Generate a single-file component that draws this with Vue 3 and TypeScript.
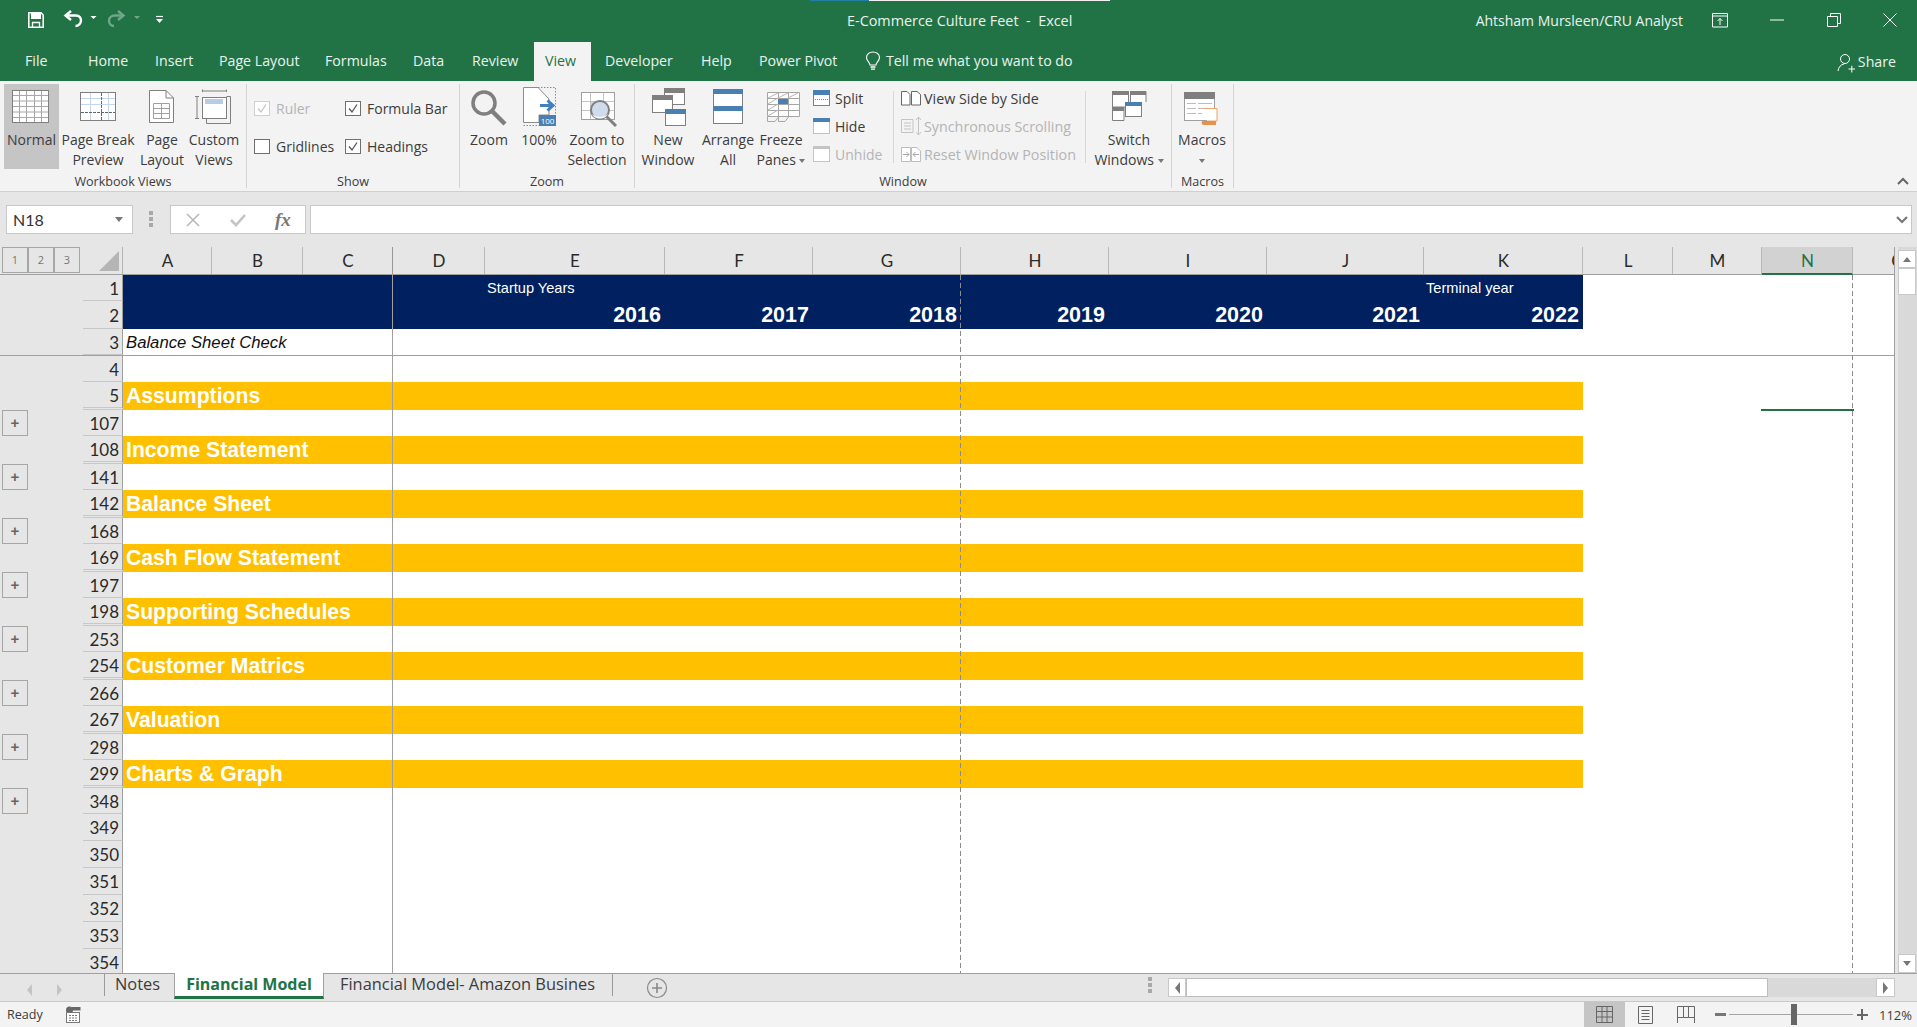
<template>
  <div class="excel">
    <!-- Title bar -->
    <div class="titlebar">
      <div class="load-bar"></div>
      <div class="qat">
        <svg class="qat-save" viewBox="28 13 16 16" width="16" height="16"><path d="M28.8 13.8H41L43.2 16V28.2H28.8Z" fill="none" stroke="#fff" stroke-width="1.6"/><rect x="31" y="14" width="10" height="6" fill="#fff"/><path d="M32.5 28V23.5H39.5V28" fill="none" stroke="#fff" stroke-width="1.4"/></svg>
        <svg class="qat-undo" viewBox="62 12 40 20" width="40" height="20"><path d="M66 17.5H76C79.5 17.5 81 20 81 22.5C81 25.5 78.5 28 75.5 28" fill="none" stroke="#fff" stroke-width="2.4"/><path d="M71 13L65.5 17.5L71 22" fill="none" stroke="#fff" stroke-width="2.4"/><path d="M90.5 18H96.5L93.5 21Z" fill="#fff"/></svg>
        <svg class="qat-redo" viewBox="106 12 36 20" width="36" height="20"><path d="M122 17.5H115C111 17.5 109 20 109 22.5C109 25.5 111 28 114 28" fill="none" stroke="#6fa788" stroke-width="2.4"/><path d="M118 13L123.5 17.5L118 22" fill="none" stroke="#6fa788" stroke-width="2.4"/><path d="M134 18H140L137 21Z" fill="#6fa788"/></svg>
        <svg class="qat-more" viewBox="155 15 9 10" width="9" height="10"><path d="M156 16.5H163" stroke="#fff" stroke-width="1.2"/><path d="M156 19H163L159.5 23Z" fill="#fff"/></svg>
      </div>
      <div class="title">E-Commerce Culture Feet&nbsp; -&nbsp; Excel</div>
      <div class="user">Ahtsham Mursleen/CRU Analyst</div>
      <div class="win-btn"><svg viewBox="0 0 16 16" width="16" height="16"><path d="M.5 1.5H15.5V15H.5Z M.5 4H15.5" fill="none" stroke="#fff"/><path d="M8 13V6.5M5.5 9L8 6.5L10.5 9" fill="none" stroke="#fff"/></svg></div>
      <div class="win-btn"><svg viewBox="0 0 14 14" width="14" height="14"><path d="M0 7H14" stroke="#fff"/></svg></div>
      <div class="win-btn"><svg viewBox="0 0 14 14" width="14" height="14"><path d="M.5 3.5H10.5V13.5H.5Z M3.5 3.5V.5H13.5V10.5H10.5" fill="none" stroke="#fff"/></svg></div>
      <div class="win-btn"><svg viewBox="0 0 14 14" width="14" height="14"><path d="M.5 .5L13.5 13.5M13.5 .5L.5 13.5" stroke="#fff"/></svg></div>
    </div>

    <!-- Ribbon tabs -->
    <div class="tabs">
      <div
        v-for="t in tabs"
        :key="t.label"
        class="tab"
        :class="{ active: t.label === 'View' }"
        :style="{ width: t.w + 'px', paddingLeft: (t.pad || 0) + 'px' }"
      >{{ t.label }}</div>
      <svg class="bulb" viewBox="0 0 16 20" width="16" height="20"><path d="M5 14C5 11.5 1.5 10 1.5 6.5C1.5 3.2 4.5 1 8 1C11.5 1 14.5 3.2 14.5 6.5C14.5 10 11 11.5 11 14Z" fill="none" stroke="#fff" stroke-width="1.1"/><path d="M5.5 16H10.5M6 18.2H10" stroke="#fff" stroke-width="1.3"/></svg>
      <div class="tell">Tell me what you want to do</div>
      <div class="share">
        <svg viewBox="0 0 18 20" width="18" height="20"><circle cx="8" cy="6" r="4.5" fill="none" stroke="#fff"/><path d="M1 18C1.5 14 4 11.5 7 11M11.5 16H18M14.8 12.8V19.5" fill="none" stroke="#fff"/></svg>
        <span>Share</span>
      </div>
    </div>

    <!-- Ribbon -->
    <div class="ribbon">
      <div class="group g-views">
        <div class="group-body">
          <div class="big selected w-normal">
            <svg viewBox="4 84 55 46" width="55" height="46">
              <rect x="12.5" y="90.5" width="36" height="32" fill="#fff" stroke="#7f7f7f"/>
              <path d="M19.5 91V122M26.5 91V122M34.5 91V122M41.5 91V122M13 95.5H48M13 101H48M13 106.5H48M13 112H48M13 117.5H48" stroke="#a6a6a6"/>
            </svg>
            <div class="label">Normal</div>
          </div>
          <div class="big w-break">
            <svg viewBox="60 84 76 46" width="76" height="46">
              <rect x="80.5" y="92.5" width="35" height="28" fill="#fff" stroke="#7f7f7f"/>
              <path d="M81 98.5H115M81 104.5H115M90.5 93V120M108.5 93V120" stroke="#c5d6ea"/>
              <path d="M101.5 93V120M81 112.5H115" stroke="#666" stroke-dasharray="3 1"/>
            </svg>
            <div class="label">Page Break<br />Preview</div>
          </div>
          <div class="big w-layout">
            <svg viewBox="136 84 52 46" width="52" height="46">
              <path d="M149.5 90.5H166L173.5 98V122.5H149.5Z" fill="#fff" stroke="#7f7f7f"/>
              <path d="M166 90.5V98H173.5" fill="none" stroke="#7f7f7f"/>
              <path d="M153.5 103.5H169.5V118.5H153.5ZM153.5 108.5H169.5M153.5 113.5H169.5M161.5 103.5V118.5" fill="none" stroke="#a0a0a0"/>
            </svg>
            <div class="label">Page<br />Layout</div>
          </div>
          <div class="big w-custom">
            <svg viewBox="188 84 52 46" width="52" height="46">
              <rect x="202.5" y="97.5" width="24" height="21" fill="#fff" stroke="#7f7f7f"/>
              <path d="M226.5 96.5H230.5V123.5H206.5V118.5" fill="none" stroke="#7f7f7f"/>
              <rect x="205" y="99" width="18" height="5" fill="#b8cce4"/>
              <path d="M202.5 92V89.5M226.5 92V89.5M202.5 91H226.5M195 96.5H199M197 96.5V118.5M195 118.5H199" fill="none" stroke="#7f7f7f"/>
            </svg>
            <div class="label">Custom<br />Views</div>
          </div>
        </div>
        <div class="group-name">Workbook Views</div>
      </div>

      <div class="group g-show">
        <div class="group-body show-grid">
          <div v-for="c in checks" :key="c.label" class="check" :class="{ off: c.disabled }">
            <span class="box">
              <svg v-if="c.on" viewBox="0 0 14 13" width="14" height="13"><path d="M3 6.5L6 10L11 2.5" fill="none" stroke="currentColor" stroke-width="1.3"/></svg>
            </span>
            <span>{{ c.label }}</span>
          </div>
        </div>
        <div class="group-name">Show</div>
      </div>

      <div class="group g-zoom">
        <div class="group-body">
          <div class="big w-zoom">
            <svg viewBox="466 84 46 46" width="46" height="46">
              <circle cx="484" cy="103" r="11" fill="none" stroke="#7f7f7f" stroke-width="3.5"/>
              <path d="M492.5 111.5L505 124" stroke="#7f7f7f" stroke-width="4.5"/>
            </svg>
            <div class="label">Zoom</div>
          </div>
          <div class="big w-hundred">
            <svg viewBox="512 84 54 46" width="54" height="46">
              <path d="M523.5 87.5H538L549 99V115H539V122.5H523.5Z" fill="#fff" stroke="#8c8c8c"/>
              <path d="M538 87.5H555.5V115M523.5 125.5H539" fill="none" stroke="#8c8c8c" stroke-dasharray="1.5 1.5"/>
              <path d="M540 105.5H552M547.5 100.5L553 105.5L547.5 110.5" fill="none" stroke="#3f7fc0" stroke-width="3"/>
              <rect x="539" y="115" width="17" height="11" fill="#4a7fb5"/>
              <text x="547.5" y="124" class="tiny">100</text>
            </svg>
            <div class="label">100%</div>
          </div>
          <div class="big w-sel">
            <svg viewBox="566 84 62 46" width="62" height="46">
              <rect x="581.5" y="92.5" width="33" height="27" fill="#fff" stroke="#a0a0a0"/>
              <path d="M590.5 93V119M603.5 93V119M582 101.5H614M582 110.5H614" stroke="#c4c4c4"/>
              <rect x="591" y="102" width="13" height="8" fill="#d4d4d4"/>
              <circle cx="600" cy="110" r="9" fill="#cfdcec" stroke="#7f7f7f" stroke-width="2"/>
              <path d="M592 114C595 118 605 118 608 114C606 120 594 120 592 114Z" fill="#fff"/>
              <path d="M606.5 116.5L616 126" stroke="#7f7f7f" stroke-width="3"/>
            </svg>
            <div class="label">Zoom to<br />Selection</div>
          </div>
        </div>
        <div class="group-name">Zoom</div>
      </div>

      <div class="group g-window">
        <div class="group-body">
          <div class="big w-new">
            <svg viewBox="640 84 56 46" width="56" height="46">
              <rect x="664.5" y="88.5" width="20" height="16" fill="#fff" stroke="#7f7f7f"/><rect x="664" y="88" width="21" height="5" fill="#7f7f7f"/>
              <rect x="652.5" y="95.5" width="20" height="17" fill="#fff" stroke="#7f7f7f"/><rect x="652" y="95" width="21" height="5" fill="#7f7f7f"/>
              <rect x="665.5" y="109.5" width="20" height="16" fill="#fff" stroke="#7f7f7f"/><rect x="665" y="109" width="21" height="5" fill="#4a7fb5"/>
            </svg>
            <div class="label">New<br />Window</div>
          </div>
          <div class="big w-arrange">
            <svg viewBox="696 84 64 46" width="64" height="46">
              <rect x="713.5" y="89.5" width="29" height="34" fill="#fff" stroke="#7f7f7f"/>
              <rect x="713" y="89" width="30" height="5" fill="#4a7fb5"/><rect x="713" y="106" width="30" height="5" fill="#4a7fb5"/>
            </svg>
            <div class="label">Arrange<br />All</div>
          </div>
          <div class="big w-freeze">
            <svg viewBox="760 84 42 46" width="42" height="46">
              <path d="M767.5 92.5H799.5V116.5H767.5Z" fill="#fff" stroke="#a6a6a6"/>
              <path d="M767.5 98.5H799.5M767.5 104.5H799.5M767.5 110.5H799.5M778.5 93V116M788.5 93V116" stroke="#a6a6a6"/>
              <path d="M768 98L778 93M768 104L778 98M768 110L778 104M768 116L778 110M778 98L788 93M788 98L798 93" stroke="#b5b5b5"/>
              <path d="M767.5 117V121.5H775L778.5 117M778.5 117V121.5H785L788.5 117" fill="none" stroke="#a6a6a6"/>
              <rect x="778" y="99" width="10" height="5" fill="#4a7fb5"/>
            </svg>
            <div class="label">Freeze<br />Panes <span class="caret"></span></div>
          </div>
          <div class="small-col col-panes">
            <div class="small">
              <svg viewBox="813 90 18 16" width="18" height="16"><rect x="813.5" y="90.5" width="16" height="15" fill="#fff" stroke="#7f7f7f"/><rect x="813" y="90" width="17" height="5" fill="#4a7fb5"/><path d="M815 99.5H828" stroke="#888" stroke-dasharray="1 1"/></svg>
              <span>Split</span>
            </div>
            <div class="small">
              <svg viewBox="813 118 18 16" width="18" height="16"><rect x="813.5" y="118.5" width="16" height="15" fill="#fff" stroke="#888" stroke-dasharray="1 1"/><rect x="813" y="118" width="17" height="4" fill="#4a7fb5"/></svg>
              <span>Hide</span>
            </div>
            <div class="small off">
              <svg viewBox="813 146 18 16" width="18" height="16"><rect x="813.5" y="146.5" width="16" height="15" fill="#fff" stroke="#c4c4c4"/><rect x="813" y="146" width="17" height="3" fill="#c4c4c4"/></svg>
              <span>Unhide</span>
            </div>
          </div>
          <div class="small-col col-side">
            <div class="small">
              <svg viewBox="901 91 21 15" width="21" height="15"><path d="M901.5 91.5H907L910 94.5V105H901.5ZM911.5 105V91.5H917L920.5 94.5V105Z" fill="#fff" stroke="#666"/></svg>
              <span>View Side by Side</span>
            </div>
            <div class="small off">
              <svg viewBox="901 118 21 18" width="21" height="18"><path d="M901.5 120.5H913V133.5H901.5ZM904 124H911M904 127H911M904 130H911" fill="none" stroke="#c4c4c4"/><path d="M918.5 118V136M916 121L918.5 118L921 121M916 133L918.5 136L921 133" fill="none" stroke="#c4c4c4"/></svg>
              <span>Synchronous Scrolling</span>
            </div>
            <div class="small off">
              <svg viewBox="901 146 21 17" width="21" height="17"><path d="M901.5 147.5H910.5V161.5H901.5ZM911.5 161.5V147.5H917L920.5 151V161.5Z" fill="#fff" stroke="#bdbdbd"/><path d="M903 154.5H909M906.5 152L909 154.5L906.5 157M919 154.5H913M915.5 152L913 154.5L915.5 157" fill="none" stroke="#a8a8a8"/></svg>
              <span>Reset Window Position</span>
            </div>
          </div>
          <div class="big w-switch">
            <svg viewBox="1090 84 78 46" width="78" height="46">
              <path d="M1112.5 91.5H1128.5V107H1112.5ZM1130.5 102V91.5H1146V102" fill="#fff" stroke="#7f7f7f"/>
              <rect x="1112" y="91" width="17" height="4" fill="#7f7f7f"/><rect x="1130" y="91" width="16" height="4" fill="#7f7f7f"/>
              <path d="M1112.5 107.5H1124V120.5H1112.5Z" fill="#fff" stroke="#7f7f7f"/>
              <rect x="1112" y="107" width="12" height="4" fill="#7f7f7f"/>
              <rect x="1125.5" y="102.5" width="16" height="14" fill="#fff" stroke="#7f7f7f"/><rect x="1125" y="102" width="17" height="4" fill="#4a7fb5"/>
            </svg>
            <div class="label">Switch<br />Windows <span class="caret"></span></div>
          </div>
        </div>
        <div class="group-name">Window</div>
      </div>

      <div class="group g-macros">
        <div class="group-body">
          <div class="big w-macros">
            <svg viewBox="1172 84 60 46" width="60" height="46">
              <rect x="1184.5" y="92.5" width="30" height="28" fill="#fff" stroke="#a0a0a0"/>
              <rect x="1184" y="92" width="31" height="7" fill="#7f7f7f"/>
              <path d="M1187 103.5H1196M1198 103.5H1212M1187 108.5H1196M1198 108.5H1212M1187 113.5H1196M1198 113.5H1202" stroke="#bdbdbd"/>
              <path d="M1204 108.5H1217V121H1208V123" fill="#fff" stroke="#e8a468"/>
              <path d="M1202 121H1216V125H1204C1202 125 1201 123 1202 121Z" fill="#e8914a"/>
            </svg>
            <div class="label">Macros<br /><span class="caret"></span></div>
          </div>
        </div>
        <div class="group-name">Macros</div>
      </div>

      <svg class="collapse" viewBox="0 0 12 8" width="12" height="8"><path d="M1 7L6 2L11 7" fill="none" stroke="#666" stroke-width="2"/></svg>
    </div>

    <!-- Formula bar -->
    <div class="formula">
      <div class="namebox"><span>N18</span><i class="down"></i></div>
      <div class="grip"></div>
      <div class="fx-box">
        <svg viewBox="0 0 16 16" width="16" height="16"><path d="M2 2L14 14M14 2L2 14" stroke="#b8b8b8" stroke-width="1.6"/></svg>
        <svg viewBox="0 0 18 16" width="18" height="16"><path d="M2 8L7 13L16 3" fill="none" stroke="#c4c4c4" stroke-width="2.6"/></svg>
        <span class="fx">fx</span>
      </div>
      <div class="input">
        <svg viewBox="0 0 12 8" width="12" height="8"><path d="M1 1L6 6L11 1" fill="none" stroke="#777" stroke-width="2.2"/></svg>
      </div>
    </div>

    <!-- Sheet -->
    <div class="sheet">
      <div class="grid">
        <div class="col-row">
          <div class="levels">
            <span v-for="l in [1, 2, 3]" :key="l" class="level">{{ l }}</span>
          </div>
          <div class="corner"><i></i></div>
          <div
            v-for="c in columns"
            :key="c.name"
            class="col-head"
            :class="{ sel: c.name === 'N', frozen: c.name === 'C' }"
            :style="{ width: c.w + 'px' }"
          >{{ c.name }}</div>
        </div>

        <div
          v-for="r in rows"
          :key="r.n"
          class="row"
          :class="{ split: r.n === 3 }"
          :style="{ height: r.h + 'px' }"
        >
          <div class="gutter"><span v-if="r.plus" class="plus">+</span></div>
          <div class="rownum" :class="{ hidden: r.hiddenNext }">{{ r.n }}</div>
          <div class="pane-a" :class="{ navy: r.head, band: r.title }">
            <span v-if="r.title" class="band-title">{{ r.title }}</span>
            <span v-if="r.n === 3" class="note">Balance Sheet Check</span>
          </div>
          <div class="pane-b">
            <div v-if="r.head" class="head-cells">
              <div
                v-for="c in dataCols"
                :key="c.name"
                class="cell"
                :class="{ year: r.n === 2 }"
                :style="{ width: c.w + 'px' }"
              >{{ r.n === 1 ? c.top : c.year }}</div>
            </div>
            <div v-else-if="r.title" class="band-fill"></div>
          </div>
        </div>

        <!-- page breaks and the selected cell edge sit over the cells -->
        <div class="page-break pb-1"></div>
        <div class="page-break pb-2"></div>
        <div class="cell-edge"></div>
      </div>

      <div class="vscroll">
        <div class="vtrack">
          <div class="sb-btn"><i class="tri-up"></i></div>
          <div class="v-thumb"></div>
          <div class="sb-btn bottom"><i class="tri-down"></i></div>
        </div>
      </div>
    </div>

    <!-- Sheet tabs -->
    <div class="sheetbar">
      <div class="nav">
        <i class="nav-l"></i>
        <i class="nav-r"></i>
      </div>
      <div class="sheet-tab notes">Notes</div>
      <div class="sheet-tab current">Financial Model</div>
      <div class="sheet-tab amazon">Financial Model- Amazon Busines</div>
      <div class="add"><svg viewBox="0 0 22 22" width="22" height="22"><circle cx="11" cy="11" r="9.5" fill="none" stroke="#8a8a8a" stroke-width="1.2"/><path d="M11 6V16M6 11H16" stroke="#8a8a8a" stroke-width="1.6"/></svg></div>
      <div class="grip h-grip"></div>
      <div class="hscroll">
        <div class="sb-btn h"><i class="tri-left"></i></div>
        <div class="h-thumb"></div>
        <div class="sb-btn h right"><i class="tri-right"></i></div>
      </div>
    </div>

    <!-- Status bar -->
    <div class="status">
      <span class="ready">Ready</span>
      <svg class="rec" viewBox="0 0 16 17" width="16" height="17"><circle cx="4.5" cy="4" r="3.5" fill="#666"/><rect x="7" y="1" width="8.5" height="3.5" fill="#666"/><rect x="1.5" y="6.5" width="13" height="10" fill="#fff" stroke="#777"/><path d="M4 9.5H6M7 9.5H9M10 9.5H12M4 12H6M7 12H9M10 12H12M4 14.5H6M7 14.5H9M10 14.5H12" stroke="#777"/></svg>
      <div class="status-right">
        <div class="view-btn on">
          <svg viewBox="0 0 17 17" width="17" height="17"><path d="M.5 .5H16.5V16.5H.5ZM.5 5.5H16.5M.5 11H16.5M6 .5V16.5M11 .5V16.5" fill="none" stroke="#666"/></svg>
        </div>
        <div class="view-btn">
          <svg viewBox="0 0 15 18" width="15" height="18"><path d="M.5 .5H14.5V17.5H.5Z" fill="none" stroke="#666"/><path d="M3.5 4.5H11.5M3.5 7.5H11.5M3.5 10.5H11.5M3.5 13.5H11.5" stroke="#666"/></svg>
        </div>
        <div class="view-btn last">
          <svg viewBox="0 0 18 17" width="18" height="17"><path d="M.5 17V.5H17.5V17M6.5 .5V11.5H11.5V.5M.5 11.5H6.5M11.5 11.5H17.5" fill="none" stroke="#666"/></svg>
        </div>
        <div class="zoom-minus"></div>
        <div class="slider"><i></i></div>
        <div class="zoom-plus"></div>
        <span class="pct">112%</span>
      </div>
    </div>
  </div>
</template>

<script setup lang="ts">
interface Column {
  name: string;
  w: number;
  top?: string;
  year?: number;
}

interface Row {
  n: number;
  h: number;
  head?: boolean;
  title?: string;
  plus?: boolean;
  hiddenNext?: boolean;
}

const tabs = [
  { label: 'File', w: 63 },
  { label: 'Home', w: 67 },
  { label: 'Insert', w: 64 },
  { label: 'Page Layout', w: 106 },
  { label: 'Formulas', w: 88 },
  { label: 'Data', w: 59 },
  { label: 'Review', w: 62 },
  { label: 'View', w: 57, pad: 11 },
  { label: 'Developer', w: 110, pad: 14 },
  { label: 'Help', w: 58 },
  { label: 'Power Pivot', w: 106 },
];

const checks = [
  { label: 'Ruler', on: true, disabled: true },
  { label: 'Formula Bar', on: true },
  { label: 'Gridlines', on: false },
  { label: 'Headings', on: true },
];

const columns: Column[] = [
  { name: 'A', w: 89 },
  { name: 'B', w: 91 },
  { name: 'C', w: 90 },
  { name: 'D', w: 92 },
  { name: 'E', w: 180, top: 'Startup Years', year: 2016 },
  { name: 'F', w: 148, year: 2017 },
  { name: 'G', w: 148, year: 2018 },
  { name: 'H', w: 148, year: 2019 },
  { name: 'I', w: 158, year: 2020 },
  { name: 'J', w: 157, year: 2021 },
  { name: 'K', w: 159, top: 'Terminal year', year: 2022 },
  { name: 'L', w: 90 },
  { name: 'M', w: 89 },
  { name: 'N', w: 91 },
  { name: 'O', w: 90 },
];

const dataCols = columns.slice(3, 11);

const sections: [number, string, number][] = [
  [5, 'Assumptions', 107],
  [108, 'Income Statement', 141],
  [142, 'Balance Sheet', 168],
  [169, 'Cash Flow Statement', 197],
  [198, 'Supporting Schedules', 253],
  [254, 'Customer Matrics', 266],
  [267, 'Valuation', 298],
  [299, 'Charts & Graph', 348],
];

const rows: Row[] = [
  { n: 1, h: 26, head: true },
  { n: 2, h: 28, head: true },
  { n: 3, h: 27 },
  { n: 4, h: 26 },
];

for (const [first, title, last] of sections) {
  rows.push({ n: first, h: 28, title, hiddenNext: true });
  rows.push({ n: last, h: 26, plus: true });
}

for (let n = 349; n <= 354; n++) {
  rows.push({ n, h: 27 });
}
</script>

<style>
html,
body {
  margin: 0;
  overflow: hidden;
}
</style>

<style scoped>
.excel {
  width: 1917px;
  height: 1027px;
  display: flex;
  flex-direction: column;
  overflow: hidden;
  font-family: "Open Sans", "Noto Sans", sans-serif;
  color: #3c3c3c;
  background: #e6e6e6;
}

/* title bar */
.titlebar {
  position: relative;
  height: 40px;
  flex: none;
  display: flex;
  align-items: center;
  background: #217346;
  color: #eaf4ee;
  font-size: 14px;
}

.load-bar {
  position: absolute;
  left: 810px;
  top: 0;
  width: 300px;
  height: 1px;
  background: linear-gradient(90deg, #1f7fa6 0 59px, #f1f1f1 59px);
}

.qat {
  width: 847px;
  flex: none;
  display: flex;
  align-items: center;
  padding-left: 28px;
  box-sizing: border-box;
}

.qat-undo {
  margin-left: 18px;
}

.qat-redo {
  margin-left: 4px;
}

.qat-more {
  margin-left: 13px;
}

.title {
  font-size: 14.4px;
  white-space: nowrap;
}

.user {
  margin-left: auto;
  margin-right: 8px;
  white-space: nowrap;
}

.win-btn {
  width: 57px;
  display: flex;
  justify-content: center;
  flex: none;
}

.win-btn:last-child {
  width: 55px;
}

/* ribbon tabs */
.tabs {
  height: 41px;
  flex: none;
  display: flex;
  align-items: stretch;
  padding-left: 25px;
  background: #217346;
  color: #eaf4ee;
  font-size: 14.2px;
  white-space: nowrap;
}

.tab {
  box-sizing: border-box;
  padding-top: 11px;
}

.tab.active {
  margin-top: 2px;
  padding-top: 9px;
  background: #f3f3f3;
  color: #217346;
}

.bulb {
  margin: 11px 0 0 0;
}

.tell {
  margin-left: 5px;
  padding-top: 11px;
}

.share {
  margin-left: auto;
  margin-right: 21px;
  display: flex;
  align-items: flex-start;
  gap: 3px;
  padding-top: 12px;
}

.share svg {
  margin-top: 1px;
}

/* ribbon */
.ribbon {
  position: relative;
  height: 111px;
  flex: none;
  box-sizing: border-box;
  display: flex;
  background: #f3f3f3;
  border-bottom: 1px solid #cfcfcf;
  font-size: 14px;
}

.group {
  height: 104px;
  margin-top: 3px;
  box-sizing: border-box;
  flex: none;
  display: flex;
  flex-direction: column;
  border-right: 1px solid #d4d4d4;
}

.group-body {
  height: 85px;
  display: flex;
  flex: none;
}

.group-name {
  text-align: center;
  font-size: 12.6px;
  line-height: 18px;
  margin-top: 4px;
  flex: none;
  white-space: nowrap;
}

.g-views {
  width: 247px;
}

.g-views .group-body {
  padding-left: 4px;
}

.g-show {
  width: 213px;
}

.g-zoom {
  width: 175px;
}

.g-zoom .group-body {
  padding-left: 6px;
}

.g-window {
  width: 537px;
}

.g-window .group-body {
  padding-left: 5px;
}

.g-macros {
  width: 62px;
}

.big {
  flex: none;
  display: flex;
  flex-direction: column;
  align-items: center;
  line-height: 20px;
  white-space: nowrap;
}

.big svg {
  flex: none;
  display: block;
}

.label {
  text-align: center;
}

.big.selected {
  background: #c5c5c5;
}

.w-normal {
  width: 55px;
}

.w-break {
  width: 76px;
  margin-left: 1px;
}

.w-layout,
.w-custom {
  width: 52px;
}

.w-zoom {
  width: 46px;
}

.w-hundred {
  width: 54px;
}

.w-sel {
  width: 62px;
}

.w-new {
  width: 56px;
}

.w-arrange {
  width: 64px;
}

.w-freeze {
  width: 42px;
}

.w-switch {
  width: 78px;
  margin-left: 4px;
}

.w-macros {
  width: 60px;
}

.tiny {
  font-size: 8px;
  fill: #fff;
  text-anchor: middle;
}

.caret {
  display: inline-block;
  width: 0;
  height: 0;
  border: 3.5px solid transparent;
  border-top: 4px solid #777;
  border-bottom: 0;
  vertical-align: middle;
}

.show-grid {
  display: grid;
  grid-template-columns: 91px 1fr;
  grid-auto-rows: 20px;
  row-gap: 18px;
  padding: 14px 0 0 7px;
  box-sizing: border-box;
}

.check {
  display: flex;
  align-items: center;
  gap: 6px;
  white-space: nowrap;
}

.box {
  width: 14px;
  height: 13px;
  flex: none;
  display: block;
  border: 1px solid #6f6f6f;
  background: #fff;
  color: #555;
}

.box svg {
  display: block;
}

.check.off {
  color: #b4b4b4;
}

.check.off .box {
  border-color: #cfcfcf;
  color: #c4c4c4;
}

.small-col {
  flex: none;
  display: flex;
  flex-direction: column;
  box-sizing: border-box;
}

.col-panes {
  width: 80px;
  margin-left: 11px;
}

.col-side {
  width: 193px;
  padding-left: 7px;
  border-left: 1px solid #d8d8d8;
  border-right: 1px solid #d8d8d8;
  height: 72px;
  margin-top: 7px;
  font-size: 14.3px;
}

.small {
  height: 28px;
  flex: none;
  display: flex;
  align-items: center;
  gap: 4px;
  white-space: nowrap;
}

.col-side .small {
  margin-top: -7px;
  margin-bottom: 7px;
  gap: 2px;
}

.small svg {
  flex: none;
}

.small.off {
  color: #b4b4b4;
}

.collapse {
  position: absolute;
  right: 8px;
  bottom: 6px;
}

/* formula bar */
.formula {
  height: 55px;
  flex: none;
  box-sizing: border-box;
  display: flex;
  padding: 13px 5px 13px 6px;
  background: #e6e6e6;
}

.namebox,
.fx-box,
.input {
  box-sizing: border-box;
  border: 1px solid #c8c8c8;
  background: #fff;
  display: flex;
  align-items: center;
}

.namebox {
  width: 127px;
  padding: 0 7px 0 6px;
  justify-content: space-between;
  font-family: Lato, sans-serif;
  font-size: 16px;
  color: #333;
}

.down {
  border: 4px solid transparent;
  border-top: 5px solid #777;
  border-bottom: 0;
  margin-right: 2px;
}

.grip {
  width: 4px;
  height: 16px;
  background: repeating-linear-gradient(#a8a8a8 0 4px, transparent 4px 6px);
}

.formula .grip {
  margin: 6px 17px 0 16px;
}

.fx-box {
  width: 136px;
  padding-left: 14px;
  gap: 28px;
  margin-right: 4px;
}

.fx {
  font-family: "Liberation Serif", serif;
  font-style: italic;
  font-weight: 700;
  font-size: 19px;
  color: #777;
}

.input {
  flex: 1;
  justify-content: flex-end;
  padding-right: 3px;
}

/* sheet */
.sheet {
  position: relative;
  height: 726px;
  flex: none;
  display: flex;
  overflow: hidden;
}

.grid {
  position: relative;
  width: 1895px;
  flex: none;
  box-sizing: border-box;
  border-right: 1px solid #a0a0a0;
  overflow: hidden;
}

.col-row {
  height: 28px;
  box-sizing: border-box;
  display: flex;
  border-bottom: 1px solid #a0a0a0;
  width: 1985px;
}

.levels {
  width: 83px;
  flex: none;
  display: flex;
  padding-left: 2px;
  box-sizing: border-box;
}

.level {
  width: 26px;
  height: 26px;
  box-sizing: border-box;
  border: 1px solid #a6a6a6;
  text-align: center;
  font-size: 11px;
  line-height: 24px;
  color: #777;
}

.corner {
  position: relative;
  width: 40px;
  flex: none;
  box-sizing: border-box;
  border-right: 1px solid #b4b4b4;
}

.corner i {
  position: absolute;
  left: 16px;
  top: 4px;
  width: 0;
  height: 0;
  border-left: 20px solid transparent;
  border-bottom: 20px solid #b5b5b5;
}

.col-head {
  box-sizing: border-box;
  flex: none;
  padding-left: 1px;
  text-align: center;
  font-family: Lato, sans-serif;
  font-size: 17px;
  line-height: 27px;
  color: #2a2a2a;
  border-right: 1px solid #b9b9b9;
}

.col-head.frozen {
  border-right-color: #999;
}

.col-head.sel {
  background: #d2d2d2;
  color: #217346;
  border-bottom: 2px solid #217346;
  height: 28px;
}

.row {
  display: flex;
  box-sizing: border-box;
}

.row.split {
  border-bottom: 1px solid #a0a0a0;
}

.gutter {
  width: 83px;
  flex: none;
  padding-left: 2px;
  box-sizing: border-box;
}

.plus {
  display: block;
  width: 26px;
  height: 26px;
  box-sizing: border-box;
  border: 1px solid #a6a6a6;
  text-align: center;
  font-family: "Liberation Sans", sans-serif;
  font-size: 15px;
  font-weight: 700;
  line-height: 23px;
  color: #666;
}

.rownum {
  width: 40px;
  flex: none;
  box-sizing: border-box;
  padding: 1px 3px 0 0;
  text-align: right;
  font-family: Lato, sans-serif;
  font-size: 17px;
  display: flex;
  align-items: center;
  justify-content: flex-end;
  color: #2a2a2a;
  border-right: 1px solid #a0a0a0;
  border-bottom: 1px solid #c6c6c6;
}

.rownum.hidden {
  border-bottom: 3px double #c8c8c8;
}

.pane-a {
  width: 270px;
  flex: none;
  box-sizing: border-box;
  display: flex;
  align-items: center;
  background: #fff;
  border-right: 1px solid #a0a0a0;
  padding-left: 3px;
  font-family: "Liberation Sans", sans-serif;
  white-space: nowrap;
}

.pane-a.navy {
  background: #002060;
}

.pane-a.band {
  background: #ffc000;
}

.band-title {
  color: #fff;
  font-size: 21.2px;
  font-weight: 700;
}

.note {
  font-style: italic;
  font-size: 16.7px;
  color: #111;
  margin-top: 1px;
}

.pane-b {
  flex: 1;
  background: #fff;
  display: flex;
}

.head-cells {
  display: flex;
  background: #002060;
  font-family: "Liberation Sans", sans-serif;
  color: #fff;
}

.cell {
  box-sizing: border-box;
  padding: 0 4px 0 2px;
  font-size: 14.6px;
  line-height: 27px;
  white-space: nowrap;
}

.cell.year {
  text-align: right;
  font-size: 21.5px;
  font-weight: 700;
  line-height: 28px;
}

.band-fill {
  width: 1190px;
  background: #ffc000;
}

.page-break {
  position: absolute;
  top: 28px;
  bottom: 0;
  width: 1px;
  background: repeating-linear-gradient(#8c8c8c 0 5px, transparent 5px 8px);
}

.pb-1 {
  left: 960px;
}

.pb-2 {
  left: 1852px;
}

.cell-edge {
  position: absolute;
  left: 1761px;
  top: 162px;
  width: 93px;
  height: 2px;
  background: #217346;
}

/* scrollbars */
.vscroll {
  width: 22px;
  flex: none;
  padding-left: 3px;
  box-sizing: border-box;
  background: #e6e6e6;
}

.vtrack {
  position: relative;
  height: 100%;
  background: #d9d9d9;
  padding-top: 3px;
  box-sizing: border-box;
}

.sb-btn {
  box-sizing: border-box;
  width: 18px;
  height: 18px;
  background: #fff;
  border: 1px solid #c8c8c8;
  display: flex;
  align-items: center;
  justify-content: center;
}

.sb-btn.bottom {
  position: absolute;
  bottom: 0;
  left: 0;
  height: 19px;
}

.v-thumb {
  box-sizing: border-box;
  width: 18px;
  height: 27px;
  background: #fff;
  border: 1px solid #c8c8c8;
}

.tri-up,
.tri-down,
.tri-left,
.tri-right {
  display: block;
  width: 0;
  height: 0;
  border: 4px solid transparent;
}

.tri-up {
  border-bottom: 5px solid #777;
  border-top: 0;
}

.tri-down {
  border-top: 5px solid #777;
  border-bottom: 0;
}

.tri-left {
  border-right: 5px solid #777;
  border-left: 0;
  border-width: 6px 5px 6px 0;
}

.tri-right {
  border-left: 5px solid #777;
  border-right: 0;
  border-width: 6px 0 6px 5px;
}

/* sheet tabs */
.sheetbar {
  height: 29px;
  flex: none;
  box-sizing: border-box;
  display: flex;
  align-items: stretch;
  background: #e6e6e6;
  border-top: 1px solid #a0a0a0;
  border-bottom: 1px solid #c8c8c8;
  font-size: 16.4px;
}

.nav {
  width: 104px;
  box-sizing: border-box;
  flex: none;
  display: flex;
  align-items: center;
  gap: 25px;
  padding: 5px 0 0 27px;
}

.nav i {
  display: block;
  width: 0;
  height: 0;
  border: 6px solid transparent;
}

.nav-l {
  border-right: 5px solid #c4c4c4 !important;
  border-left: 0 !important;
}

.nav-r {
  border-left: 5px solid #c4c4c4 !important;
  border-right: 0 !important;
}

.sheet-tab {
  box-sizing: border-box;
  white-space: nowrap;
  line-height: 20px;
  flex: none;
}

.notes {
  width: 70px;
  padding-left: 10px;
  border-left: 1px solid #9a9a9a;
  margin: 0 0 5px;
}

.current {
  width: 150px;
  height: 26px;
  text-align: center;
  background: #fff;
  color: #217346;
  font-size: 16px;
  font-weight: 700;
  border-bottom: 3px solid #217346;
  border-left: 1px solid #a0a0a0;
  border-right: 1px solid #a0a0a0;
  margin-top: -1px;
  padding-top: 1px;
}

.amazon {
  width: 289px;
  padding-left: 16px;
  border-right: 1px solid #9a9a9a;
  margin: 0 0 5px;
}

.add {
  width: 66px;
  flex: none;
  padding: 3px 0 0 33px;
  box-sizing: border-box;
}

.h-grip {
  margin: 3px 16px 0 auto;
}

.hscroll {
  width: 727px;
  margin: 4px 22px 4px 0;
  flex: none;
  display: flex;
  background: #d9d9d9;
}

.sb-btn.h {
  height: 100%;
}

.sb-btn.right {
  margin-left: auto;
  width: 19px;
}

.h-thumb {
  box-sizing: border-box;
  width: 582px;
  background: #fff;
  border: 1px solid #bdbdbd;
}

/* status bar */
.status {
  flex: 1;
  display: flex;
  align-items: center;
  background: #f3f3f3;
  padding-left: 7px;
  font-size: 12.6px;
}

.rec {
  margin-left: 22px;
}

.status-right {
  margin-left: auto;
  align-self: stretch;
  display: flex;
  align-items: center;
  padding-right: 5px;
}

.view-btn {
  width: 41px;
  align-self: stretch;
  display: flex;
  align-items: center;
  justify-content: center;
}

.view-btn.on {
  background: #c5c5c5;
}

.view-btn.last {
  margin-right: 3px;
}

.zoom-minus {
  width: 11px;
  height: 3px;
  margin: 0 3px 0 5px;
  background: #777;
}

.slider {
  position: relative;
  width: 124px;
  height: 1px;
  background: #a6a6a6;
}

.slider i {
  position: absolute;
  left: 62px;
  top: -10px;
  width: 6px;
  height: 21px;
  background: #666;
}

.zoom-plus {
  width: 11px;
  height: 11px;
  margin: 0 11px 0 4px;
  background:
    linear-gradient(#666, #666) center / 11px 2px no-repeat,
    linear-gradient(#666, #666) center / 2px 11px no-repeat;
}

.pct {
  font-size: 13px;
  white-space: nowrap;
}
</style>
